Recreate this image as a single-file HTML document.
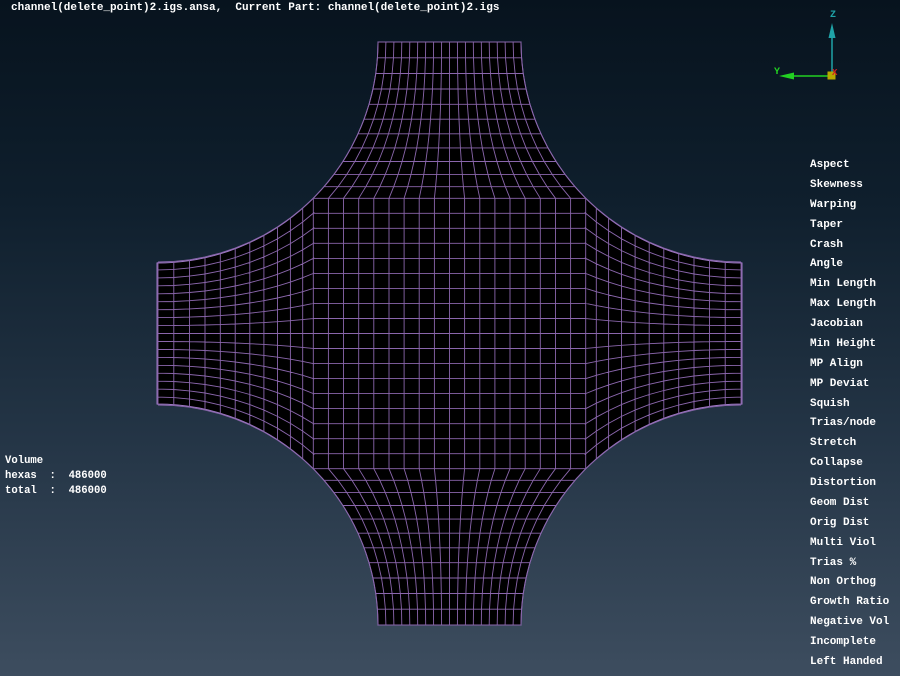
<!DOCTYPE html>
<html><head><meta charset="utf-8"><style>
html,body{margin:0;padding:0}
body{width:900px;height:676px;overflow:hidden;position:relative;background:linear-gradient(180deg,#07131e 0%,#0f1f2d 30%,#243546 65%,#3d4d5f 100%);font-family:"Liberation Mono","DejaVu Sans Mono",monospace;font-weight:bold;color:#fff;font-size:11px}
.t{position:absolute;white-space:pre;line-height:13px}
#list{position:absolute;left:810px;top:159px}
#list div{height:19.88px;line-height:13px;white-space:pre}
svg{position:absolute;left:0;top:0}
</style></head><body>
<div class="t" style="left:11px;top:2px">channel(delete_point)2.igs.ansa,  Current Part: channel(delete_point)2.igs</div>
<div class="t" style="left:5px;top:454px;line-height:15px;font-size:10.6px">Volume
hexas  :  486000
total  :  486000</div>
<div id="list"><div>Aspect</div><div>Skewness</div><div>Warping</div><div>Taper</div><div>Crash</div><div>Angle</div><div>Min Length</div><div>Max Length</div><div>Jacobian</div><div>Min Height</div><div>MP Align</div><div>MP Deviat</div><div>Squish</div><div>Trias/node</div><div>Stretch</div><div>Collapse</div><div>Distortion</div><div>Geom Dist</div><div>Orig Dist</div><div>Multi Viol</div><div>Trias %</div><div>Non Orthog</div><div>Growth Ratio</div><div>Negative Vol</div><div>Incomplete</div><div>Left Handed</div></div>
<svg width="900" height="676" id="s">
<path id="fill" fill="#000" stroke="#a07ac6" stroke-width="1"/>
<g id="g" fill="none" stroke="#8a66ac" stroke-width="0.9"></g>
<line x1="832" y1="76" x2="832" y2="38" stroke="#1fa3a8" stroke-width="1.5"/>
<polygon points="832,23 828.5,38 835.5,38" fill="#1fa3a8"/>
<text x="830" y="17" fill="#1fa3a8" font-size="10" font-family="Liberation Mono" font-weight="bold">Z</text>
<line x1="832" y1="76" x2="793" y2="76" stroke="#22d022" stroke-width="1.5"/>
<polygon points="779,76 794,72.5 794,79.5" fill="#22d022"/>
<text x="774" y="74" fill="#22d022" font-size="10" font-family="Liberation Mono" font-weight="bold">Y</text>
<rect x="827.5" y="71.5" width="8" height="8" fill="#b8a800"/>
<text x="832" y="75" fill="#d02020" font-size="9" font-family="Liberation Mono" font-weight="bold">X</text>
</svg>
<script>
(function(){
var cx=449.5,cy=333.5,r=221,h=r/Math.SQRT2;
var N=18,R=11,g=document.getElementById('g');
var x0=157+h,x1=742-h,yi=42+h;
function arcL(s){var th=Math.PI/4*(1-s);return [157+r*Math.cos(th),42+r*Math.sin(th)];}
function arcR(s){var th=Math.PI/4*(1-s);return [742-r*Math.cos(th),42+r*Math.sin(th)];}
function pt(i,s){var t=i/N;var ix=x0+(x1-x0)*t,iy=yi;var ox=378+143*t,oy=42;
 var lx=ix+(ox-ix)*s,ly=iy+(oy-iy)*s;
 var a=arcL(s),b=arcR(s);
 var l0x=x0+(378-x0)*s,l0y=yi+(42-yi)*s,l1x=x1+(521-x1)*s,l1y=l0y;
 var dx=(1-t)*(a[0]-l0x)+t*(b[0]-l1x),dy=(1-t)*(a[1]-l0y)+t*(b[1]-l1y);
 return [lx+dx,ly+dy];}
function rot(p,k){var x=p[0]-cx,y=p[1]-cy;for(var j=0;j<k;j++){var nx=-y,ny=x;x=nx;y=ny;}return [x+cx,y+cy];}
function f(p){return p[0].toFixed(1)+','+p[1].toFixed(1);}
var out='';
for(var k=0;k<4;k++){
 for(var i=0;i<=N;i++){var s='M';for(var j=0;j<=R;j++){s+=(j?' L':'')+f(rot(pt(i,j/R),k));}out+=s;}
 for(var j=1;j<=R;j++){var s='M';for(var i=0;i<=N;i++){s+=(i?' L':'')+f(rot(pt(i,j/R),k));}out+=s;}
}
for(var i=0;i<=N;i++){var x=x0+(x1-x0)*i/N;out+='M'+x.toFixed(1)+','+yi.toFixed(1)+' L'+x.toFixed(1)+','+(2*cy-yi).toFixed(1);
 var y=yi+(2*cy-2*yi)*i/N;out+='M'+x0.toFixed(1)+','+y.toFixed(1)+' L'+x1.toFixed(1)+','+y.toFixed(1);}
var p=document.createElementNS('http://www.w3.org/2000/svg','path');p.setAttribute('d',out);g.appendChild(p);
var fd='M378,42 L521,42 A221,221 0 0 0 742,263 L742,404 A221,221 0 0 0 521,625 L378,625 A221,221 0 0 0 157,404 L157,263 A221,221 0 0 0 378,42 Z';
document.getElementById('fill').setAttribute('d',fd);
})();
</script>
</body></html>
